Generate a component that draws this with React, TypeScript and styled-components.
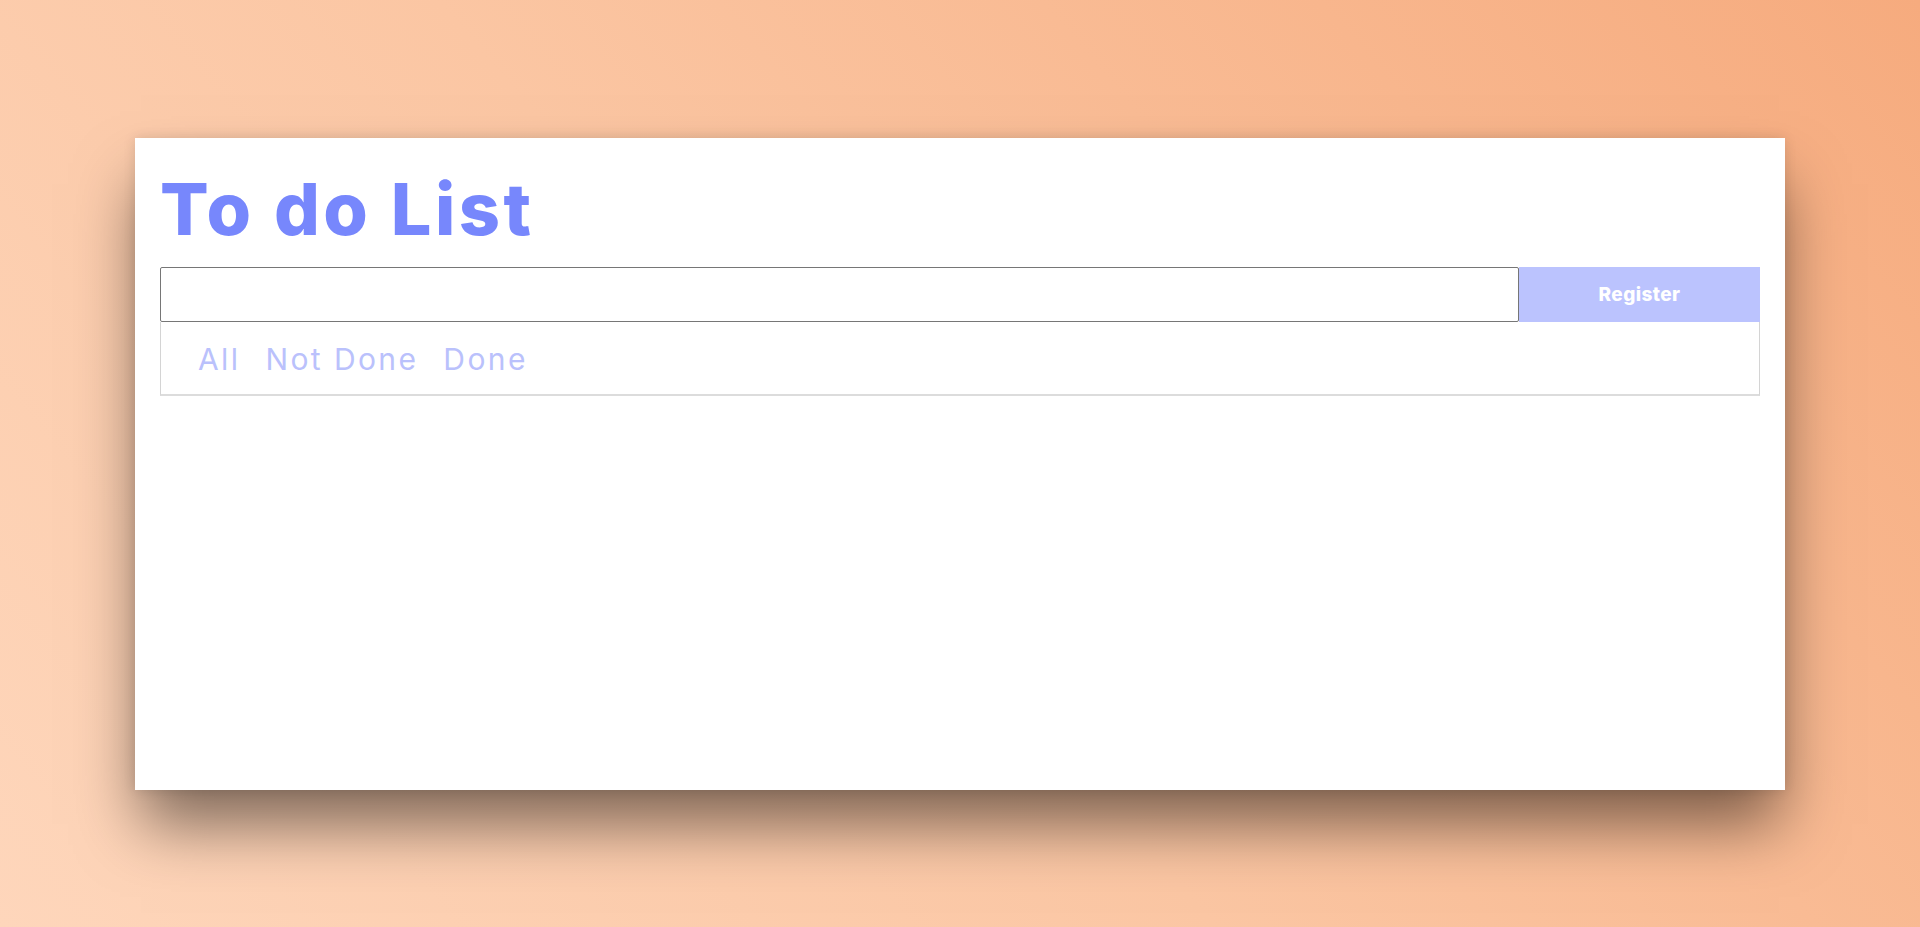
import { useState } from "react";
import styled, { createGlobalStyle } from "styled-components";

const GlobalStyle = createGlobalStyle`
  * {
    box-sizing: border-box;
  }
  body {
    margin: 0;
    font-family: Inter, "Noto Sans", sans-serif;
  }
`;

const filters = ["All", "Not Done", "Done"];

function App() {
  const [text, setText] = useState("");
  const [active, setActive] = useState("All");

  return (
    <Page>
      <GlobalStyle />
      <Card>
        <Title>To do List</Title>
        <InputRow>
          <TaskInput value={text} onChange={(e) => setText(e.target.value)} />
          <RegisterButton>Register</RegisterButton>
        </InputRow>
        <FilterBar>
          {filters.map((f) => (
            <FilterTab key={f} onClick={() => setActive(f)} $active={active === f}>
              {f}
            </FilterTab>
          ))}
        </FilterBar>
      </Card>
    </Page>
  );
}

const Page = styled.div`
  display: flex;
  align-items: center;
  justify-content: center;
  width: 100%;
  height: 100vh;
  background: linear-gradient(50deg, #fed6bb 0%, #fbc6a3 45%, #f6ab7e 100%);
`;

const Card = styled.div`
  width: 1650px;
  height: 652px;
  background-color: #fff;
  padding: 35px 25px;
  box-shadow: 0 40px 60px -6px rgba(0, 0, 0, 0.5), 0 0 12px rgba(0, 0, 0, 0.12);
`;

const Title = styled.h1`
  margin: 0 0 22px;
  font-size: 72px;
  line-height: 1;
  font-weight: 800;
  letter-spacing: 3.5px;
  color: #7787fc;
`;

const InputRow = styled.div`
  display: flex;
  height: 55px;
`;

const TaskInput = styled.input`
  flex: 1;
  height: 100%;
  border: 1px solid #767676;
  border-radius: 2px;
  padding: 0 10px;
  font-size: 18px;
  font-family: Inter, sans-serif;
  outline: none;
`;

const RegisterButton = styled.button`
  width: 241px;
  height: 100%;
  border: none;
  background-color: #bbc3fe;
  color: #fff;
  font-family: Inter, sans-serif;
  font-size: 19px;
  font-weight: 800;
  letter-spacing: 0.4px;
  cursor: pointer;
`;

const FilterBar = styled.div`
  display: flex;
  align-items: center;
  gap: 25px;
  height: 74px;
  padding-left: 37px;
  border: 1px solid #d4d4d4;
  border-top: none;
  border-bottom: 2px solid #dcdcdc;
`;

const FilterTab = styled.div<{ $active: boolean }>`
  font-size: 30px;
  line-height: 1;
  padding-top: 2px;
  letter-spacing: 2.4px;
  color: #bac1fc;
  cursor: pointer;
`;

export default App;
